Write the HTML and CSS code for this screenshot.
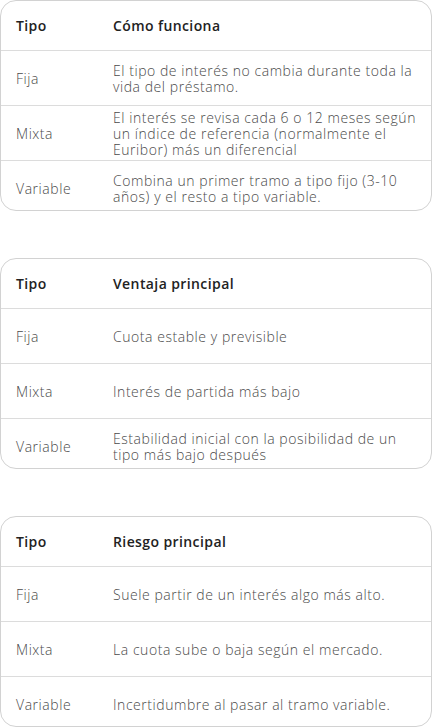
FILE: index.html
```html
<!DOCTYPE html>
<html lang="es">
  <head>
    <meta charset="UTF-8" />
    <meta name="viewport" content="width=device-width, initial-scale=1.0" />
    <title>Tipos de interés</title>
    <link rel="stylesheet" href="styles.css">
  </head>
  <body>
    <div class="table-wrap">
      <div class="row head">
        <div class="cell">Tipo</div>
        <div class="cell">Cómo funciona</div>
      </div>
      <div class="row">
        <div class="cell">Fija</div>
        <div class="cell">El tipo de interés no cambia durante toda la vida del préstamo.</div>
      </div>
      <div class="row">
        <div class="cell">Mixta</div>
        <div class="cell">El interés se revisa cada 6 o 12 meses según un índice de referencia (normalmente el Euribor) más un diferencial</div>
      </div>
      <div class="row">
        <div class="cell">Variable</div>
        <div class="cell">Combina un primer tramo a tipo fijo (3-10 años) y el resto a tipo variable.</div>
      </div>
    </div>

    <div class="table-wrap">
      <div class="row head">
        <div class="cell">Tipo</div>
        <div class="cell">Ventaja principal</div>
      </div>
      <div class="row">
        <div class="cell">Fija</div>
        <div class="cell">Cuota estable y previsible</div>
      </div>
      <div class="row">
        <div class="cell">Mixta</div>
        <div class="cell">Interés de partida más bajo</div>
      </div>
      <div class="row">
        <div class="cell">Variable</div>
        <div class="cell">Estabilidad inicial con la posibilidad de un tipo más bajo después</div>
      </div>
    </div>

    <div class="table-wrap">
      <div class="row head">
        <div class="cell">Tipo</div>
        <div class="cell">Riesgo principal</div>
      </div>
      <div class="row">
        <div class="cell">Fija</div>
        <div class="cell">Suele partir de un interés algo más alto.</div>
      </div>
      <div class="row">
        <div class="cell">Mixta</div>
        <div class="cell">La cuota sube o baja según el mercado.</div>
      </div>
      <div class="row">
        <div class="cell">Variable</div>
        <div class="cell">Incertidumbre al pasar al tramo variable.</div>
      </div>
    </div>
  </body>
</html>
```

FILE: styles.css
```css
body {
  margin: 0;
  font-family: "Open Sans", "Liberation Sans", sans-serif;
  background: #fff;
  color: #4a4a4a;
  display: flex;
  flex-direction: column;
  gap: 47px;
}
.table-wrap {
  width: 430px;
  height: 209px;
  border: 1px solid #d2d2d2;
  border-radius: 16px;
  overflow: hidden;
}
.row {
  display: grid;
  grid-template-columns: 97px 1fr;
  height: 54px;
  border-top: 1px solid #dcdcdc;
  font-size: 14px;
  font-weight: 300;
  line-height: 16px;
  letter-spacing: 0.55px;
}
.row .cell {
  display: flex;
  align-items: center;
  padding: 2px 15px 0;
}
.row.head {
  height: 49px;
  border-top: none;
  font-weight: 600;
  color: #222;
  letter-spacing: 0.4px;
}
.row.head .cell {
  padding-top: 0;
}
```
